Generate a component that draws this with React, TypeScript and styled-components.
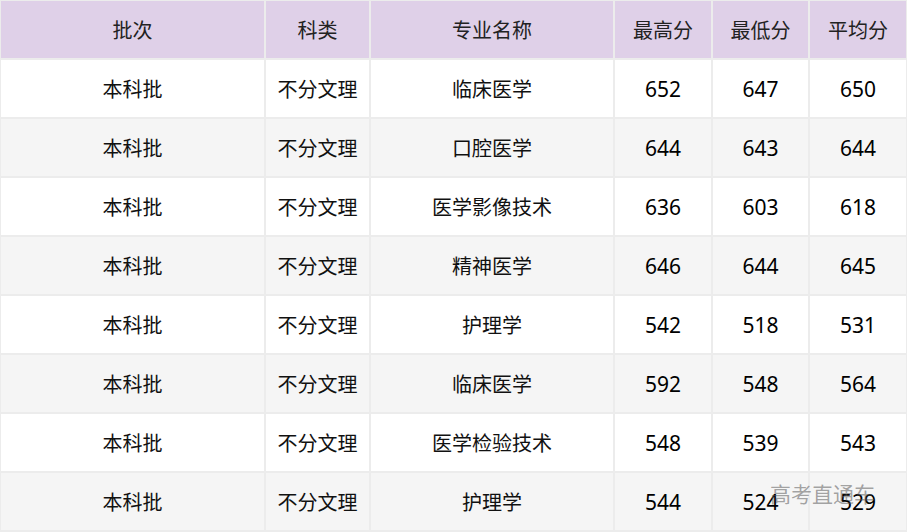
import React from 'react';
import styled, { createGlobalStyle } from 'styled-components';

const GlobalStyle = createGlobalStyle`
  html, body {
    margin: 0;
    padding: 0;
    background: #ffffff;
  }
  body {
    font-family: "Noto Sans", "Noto Sans CJK SC", sans-serif;
  }
`;

interface Row {
  batch: string;
  category: string;
  major: string;
  max: number;
  min: number;
  avg: number;
}

const rows: Row[] = [
  { batch: '本科批', category: '不分文理', major: '临床医学', max: 652, min: 647, avg: 650 },
  { batch: '本科批', category: '不分文理', major: '口腔医学', max: 644, min: 643, avg: 644 },
  { batch: '本科批', category: '不分文理', major: '医学影像技术', max: 636, min: 603, avg: 618 },
  { batch: '本科批', category: '不分文理', major: '精神医学', max: 646, min: 644, avg: 645 },
  { batch: '本科批', category: '不分文理', major: '护理学', max: 542, min: 518, avg: 531 },
  { batch: '本科批', category: '不分文理', major: '临床医学', max: 592, min: 548, avg: 564 },
  { batch: '本科批', category: '不分文理', major: '医学检验技术', max: 548, min: 539, avg: 543 },
  { batch: '本科批', category: '不分文理', major: '护理学', max: 544, min: 524, avg: 529 },
];

const columns = [
  { label: '批次', width: 265 },
  { label: '科类', width: 105 },
  { label: '专业名称', width: 244 },
  { label: '最高分', width: 98 },
  { label: '最低分', width: 97 },
  { label: '平均分', width: 98 },
];

const App: React.FC = () => {
  return (
    <>
      <GlobalStyle />
      <Wrapper>
        <Table>
          <colgroup>
            {columns.map((c) => (
              <col key={c.label} style={{ width: c.width }} />
            ))}
          </colgroup>
          <thead>
            <tr>
              {columns.map((c) => (
                <HeadCell key={c.label}>{c.label}</HeadCell>
              ))}
            </tr>
          </thead>
          <tbody>
            {rows.map((r, i) => (
              <BodyRow key={i} $striped={i % 2 === 1}>
                <Cell>{r.batch}</Cell>
                <Cell>{r.category}</Cell>
                <Cell>{r.major}</Cell>
                <NumCell>{r.max}</NumCell>
                <NumCell>{r.min}</NumCell>
                <NumCell>{r.avg}</NumCell>
              </BodyRow>
            ))}
          </tbody>
        </Table>
        <Watermark>高考直通车</Watermark>
      </Wrapper>
    </>
  );
};

export default App;

const Wrapper = styled.div`
  position: relative;
  width: 907px;
  height: 532px;
  overflow: hidden;
`;

const Table = styled.table`
  width: 909px;
  margin-left: -1px;
  margin-top: -1px;
  border-collapse: collapse;
  table-layout: fixed;
`;

const HeadCell = styled.th`
  height: 57px;
  padding: 0;
  background: #dfd0e8;
  border: 2px solid #ececec;
  font-weight: 400;
  font-size: 20px;
  color: #222;
  text-align: center;
  vertical-align: middle;
`;

const BodyRow = styled.tr<{ $striped: boolean }>`
  background: ${(p) => (p.$striped ? '#f5f5f5' : '#ffffff')};
`;

const Cell = styled.td`
  height: 57px;
  padding: 0;
  border: 2px solid #ececec;
  font-size: 20px;
  color: #111;
  text-align: center;
  vertical-align: middle;
`;

const NumCell = styled(Cell)`
  font-size: 21px;
  color: #000;
`;

const Watermark = styled.div`
  position: absolute;
  left: 770px;
  top: 478px;
  font-size: 21px;
  color: rgba(90, 90, 90, 0.55);
  letter-spacing: 0;
  pointer-events: none;
`;
